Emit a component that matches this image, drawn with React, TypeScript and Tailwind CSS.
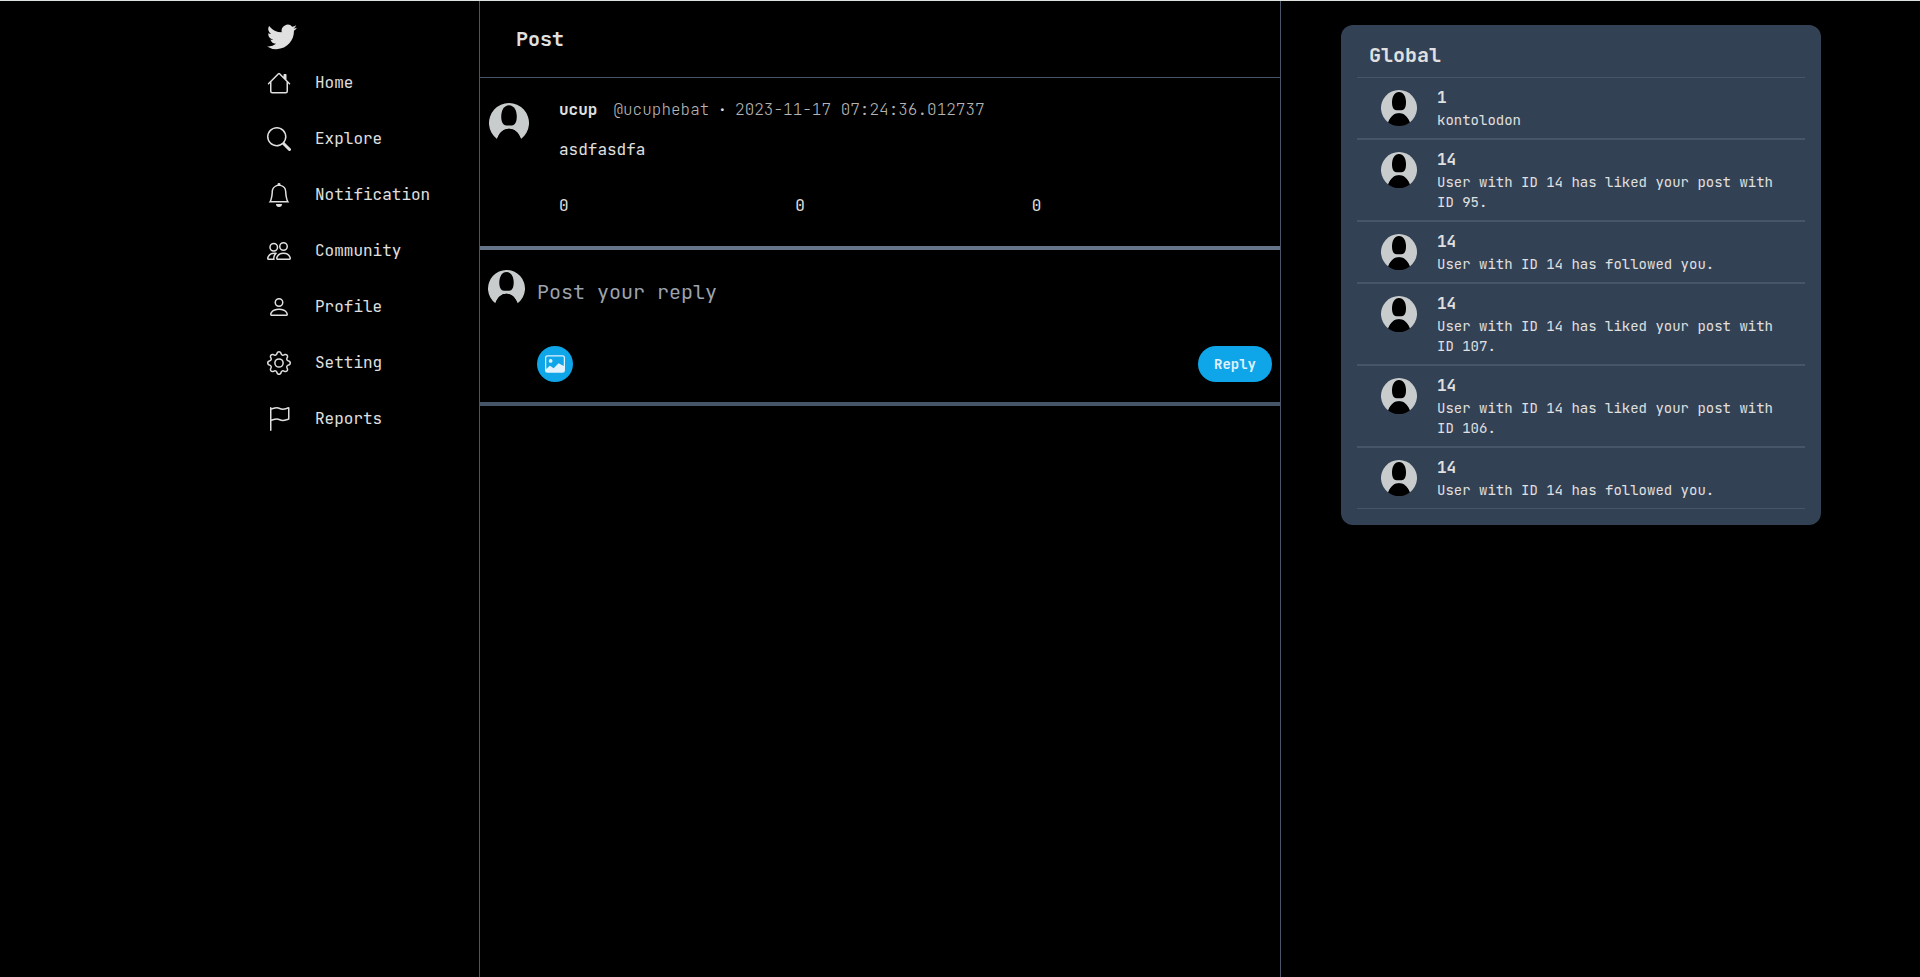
import type { IconType } from "react-icons";
import {
  BsBell,
  BsFlag,
  BsGear,
  BsHouse,
  BsImage,
  BsPeople,
  BsPerson,
  BsSearch,
  BsTwitter,
} from "react-icons/bs";

const links: { label: string; icon: IconType }[] = [
  { label: "Home", icon: BsHouse },
  { label: "Explore", icon: BsSearch },
  { label: "Notification", icon: BsBell },
  { label: "Community", icon: BsPeople },
  { label: "Profile", icon: BsPerson },
  { label: "Setting", icon: BsGear },
  { label: "Reports", icon: BsFlag },
];

const notices = [
  { from: "1", text: "kontolodon" },
  { from: "14", text: "User with ID 14 has liked your post with ID 95." },
  { from: "14", text: "User with ID 14 has followed you." },
  { from: "14", text: "User with ID 14 has liked your post with ID 107." },
  { from: "14", text: "User with ID 14 has liked your post with ID 106." },
  { from: "14", text: "User with ID 14 has followed you." },
];

function Avatar({ className }: { className: string }) {
  return (
    <svg viewBox="0 0 36 36" className={`shrink-0 ${className}`} aria-hidden="true">
      <path
        d="M7.2 32.4A18 18 0 1 1 28.8 32.4C26.500 26.500 23 23.200 18 23.200S9.500 26.500 7.200 32.400z"
        fill="#c8cccc"
      />
      <path
        d="M7.2 32.4C9.500 26.500 13 23.200 18 23.200S26.500 26.500 28.800 32.400A18 18 0 0 1 7.200 32.400z"
        fill="#000"
      />
      <path
        d="M18 2c4.400 0 7 4.600 7 10.200 0 5.200-1.700 8-4.500 8h-5c-2.800 0-4.500-2.800-4.500-8C11 6.600 13.600 2 18 2z"
        fill="#000"
      />
    </svg>
  );
}

export default function App() {
  return (
    <div className="grid min-h-screen grid-cols-12 border-t border-[#dfe3e0] bg-black font-['JetBrains_Mono','DejaVu_Sans_Mono',monospace] text-base text-[#e0e0e0]">
      <aside className="col-span-3 flex justify-end border-r border-[#475569]">
        <nav className="w-[212px] pt-5">
          <a href="#home" aria-label="Twitter" className="block w-fit">
            <BsTwitter size={30} />
          </a>
          <ul className="mt-5 flex flex-col gap-8">
            {links.map(({ label, icon: Icon }) => (
              <li key={label}>
                <a href={`#${label.toLowerCase()}`} className="flex items-center gap-6">
                  <Icon size={24} />
                  {label}
                </a>
              </li>
            ))}
          </ul>
        </nav>
      </aside>

      <main className="col-span-5">
        <header className="flex h-[77px] items-center border-b border-[#475569] px-9">
          <h1 className="text-xl font-bold">Post</h1>
        </header>

        <article className="flex gap-[30px] border-b-4 border-[#64748b] pt-5 pr-3 pb-7 pl-[9px]">
          <Avatar className="mt-[5px] size-10" />
          <div className="min-w-0 flex-1">
            <div className="flex gap-2">
              <span className="mr-2 font-bold">ucup</span>
              <span className="font-extralight text-[#b4b4b4]">@ucuphebat</span>
              <span>·</span>
              <time className="font-extralight text-[#b4b4b4]">2023-11-17 07:24:36.012737</time>
            </div>
            <p className="mt-4">asdfasdfa</p>
            <div className="mt-8 grid grid-cols-3">
              <span>0</span>
              <span>0</span>
              <span>0</span>
            </div>
          </div>
        </article>

        <form
          className="flex gap-3 border-b-4 border-[#475569] pt-5 pr-2 pb-5 pl-2"
          onSubmit={(event) => event.preventDefault()}
        >
          <Avatar className="size-[37px]" />
          <div className="min-w-0 flex-1">
            <textarea
              aria-label="Post your reply"
              placeholder="Post your reply"
              rows={2}
              className="block h-[76px] w-full resize-none bg-transparent pt-2 text-xl outline-none placeholder:text-[#9ca3af]"
            />
            <div className="flex justify-between">
              <button
                type="button"
                aria-label="Add image"
                className="flex size-9 items-center justify-center rounded-full bg-[#0ea5e9] text-[#e0f2fe]"
              >
                <BsImage size={20} />
              </button>
              <button
                type="submit"
                className="h-9 rounded-full bg-[#0ea5e9] px-4 text-sm font-bold text-[#e0f2fe]"
              >
                Reply
              </button>
            </div>
          </div>
        </form>
      </main>

      <aside className="col-span-4 border-l border-[#475569] pt-6 pl-[60px]">
        <section className="w-[480px] max-w-full rounded-xl bg-[#334155] p-4">
          <h2 className="mb-2 px-3 text-xl font-bold">Global</h2>
          <ul>
            {notices.map((notice, index) => (
              <li key={index} className="flex gap-5 border-y border-[#475569] px-6 py-2">
                <Avatar className="mt-1 size-9" />
                <div>
                  <h3 className="font-bold">{notice.from}</h3>
                  <p className="text-sm">{notice.text}</p>
                </div>
              </li>
            ))}
          </ul>
        </section>
      </aside>
    </div>
  );
}
